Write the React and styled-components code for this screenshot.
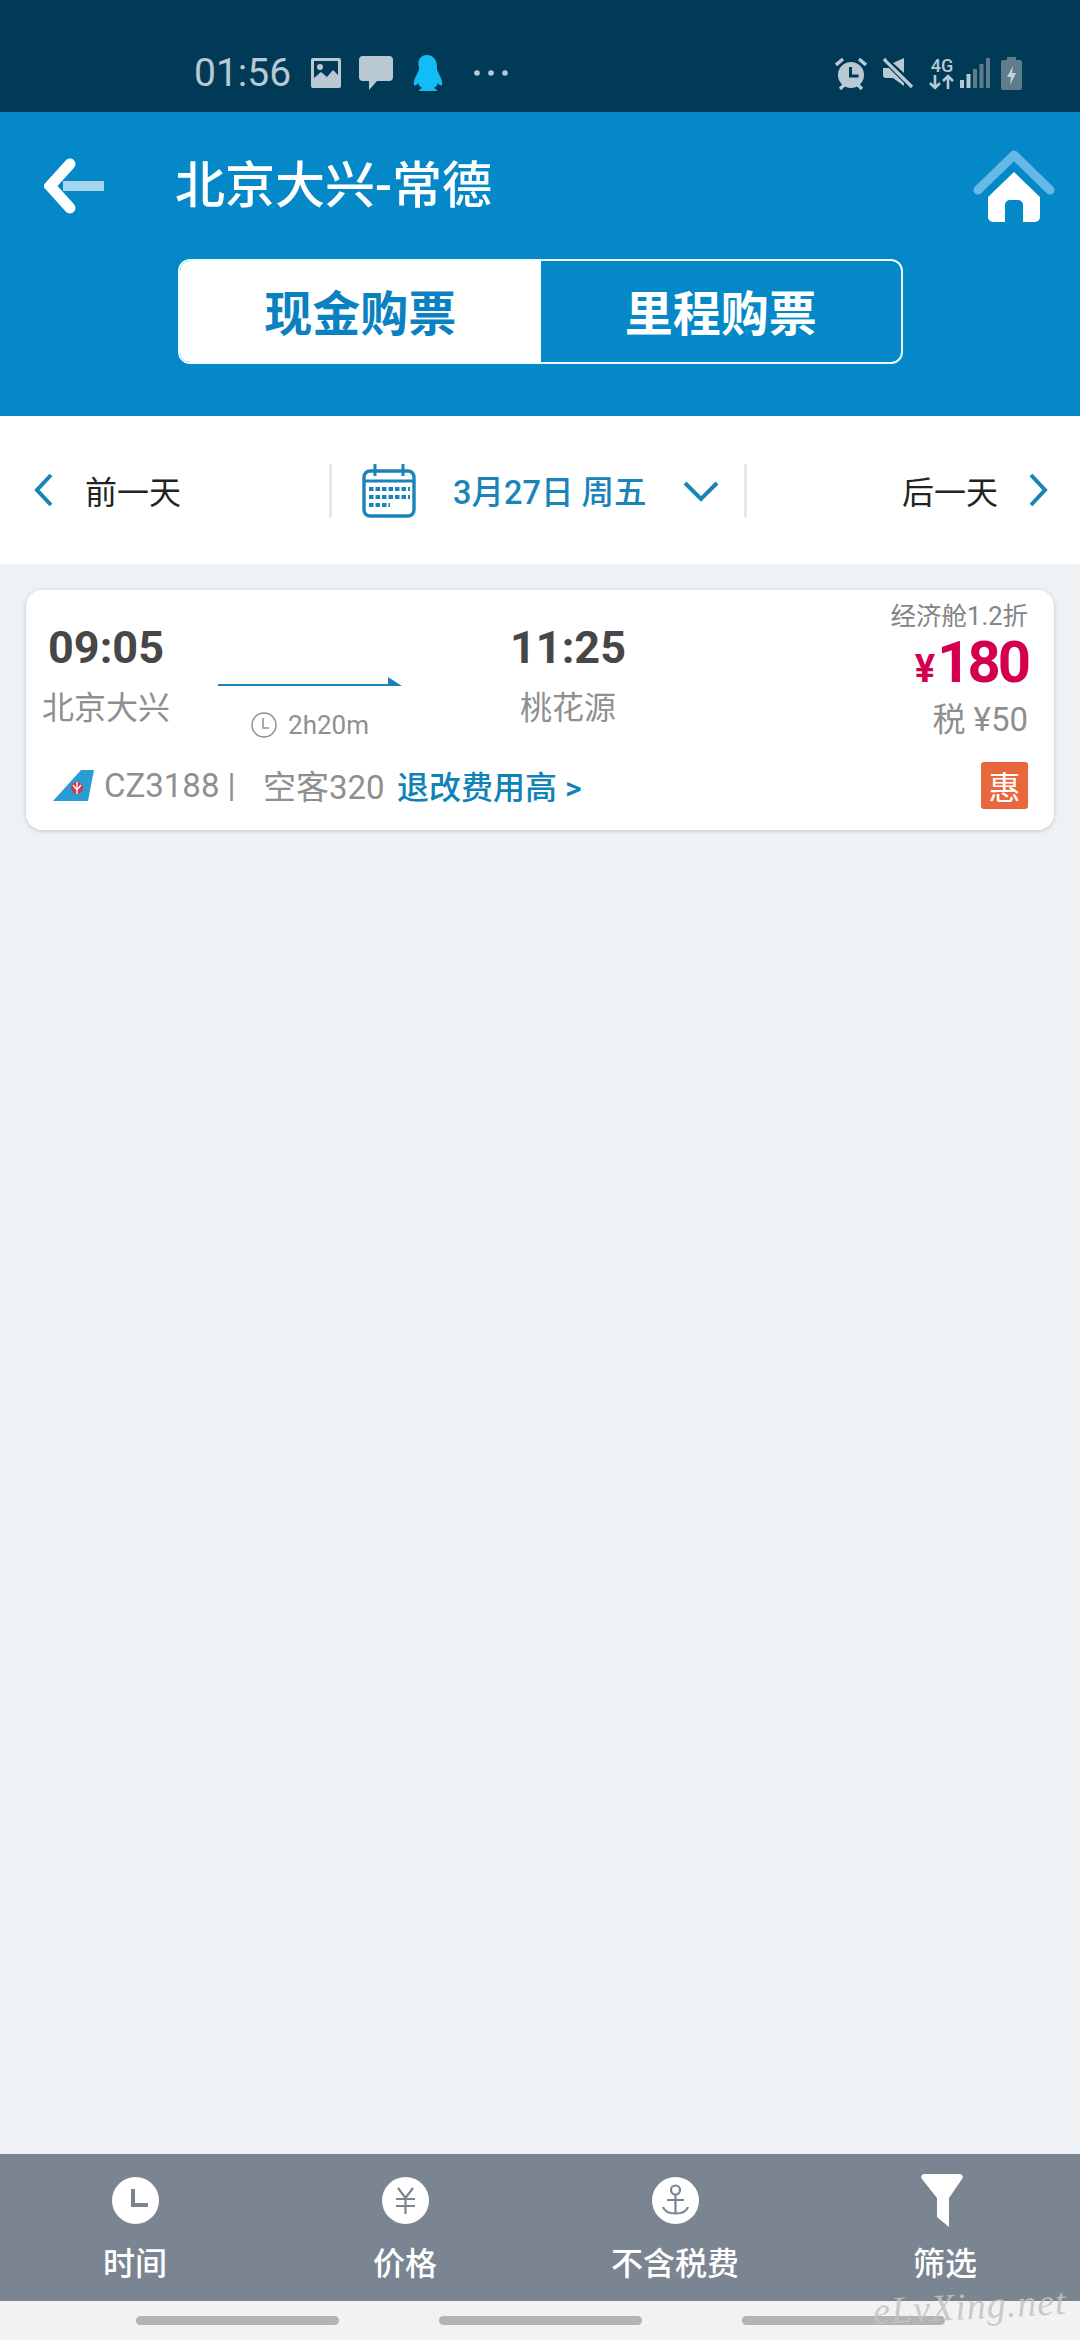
import styled, { createGlobalStyle } from "styled-components";

const GlobalStyle = createGlobalStyle`
  html, body {
    margin: 0;
    padding: 0;
    background: #eef2f5;
  }
  * {
    box-sizing: border-box;
  }
`;

const Screen = styled.div`
  position: relative;
  width: 1080px;
  height: 2340px;
  display: flex;
  flex-direction: column;
  overflow: hidden;
  background: #eef2f5;
  font-family: Roboto, "Noto Sans CJK SC", sans-serif;
`;

const StatusBar = styled.div`
  height: 112px;
  flex: none;
  display: flex;
  align-items: center;
  padding: 34px 58px 0 194px;
  background: #003a57;
  color: #b9c9d3;
`;

const Clock = styled.span`
  font-size: 39px;
  width: 117px;
  line-height: 44px;
`;

const StatusGroup = styled.div`
  display: flex;
  align-items: center;
  gap: ${(p) => p.$gap || 18}px;
  margin-left: ${(p) => (p.$right ? "auto" : "0")};
`;

const NetLabel = styled.div`
  display: flex;
  flex-direction: column;
  align-items: center;
  width: 26px;
  font-size: 18px;
  font-weight: 500;
  line-height: 17px;
`;

const Header = styled.header`
  height: 304px;
  flex: none;
  display: flex;
  flex-direction: column;
  background: #0588c8;
`;

const TitleRow = styled.div`
  display: flex;
  align-items: center;
  height: 100px;
  margin-top: 24px;
  padding: 0 25px 0 44px;
`;

const Title = styled.h1`
  margin: 0 0 0 71px;
  flex: 1;
  color: #fff;
  font-size: 50px;
  font-weight: 500;
  line-height: 60px;
`;

const Segments = styled.div`
  display: flex;
  width: 725px;
  height: 105px;
  margin: 23px 0 0 178px;
  border: 2px solid #e9fbff;
  border-radius: 12px;
  overflow: hidden;
`;

const Segment = styled.div`
  flex: 1;
  display: flex;
  align-items: center;
  justify-content: center;
  padding-bottom: 3px;
  background: ${(p) => (p.$active ? "#fff" : "transparent")};
  color: ${(p) => (p.$active ? "#0a82bf" : "#fff")};
  font-size: 48px;
  font-weight: 700;
`;

const DateBar = styled.nav`
  height: 148px;
  flex: none;
  display: flex;
  align-items: center;
  background: #fff;
  color: #222;
  font-size: 32px;
`;

const DayLink = styled.div`
  flex: ${(p) => (p.$end ? "1" : "none")};
  width: ${(p) => (p.$end ? "auto" : "329px")};
  display: flex;
  align-items: center;
  justify-content: ${(p) => (p.$end ? "flex-end" : "flex-start")};
  gap: ${(p) => (p.$end ? 30 : 31)}px;
  padding: ${(p) => (p.$end ? "0 31px 0 0" : "0 0 0 33px")};
`;

const DatePicker = styled.div`
  width: 418px;
  height: 54px;
  flex: none;
  margin-top: 2px;
  display: flex;
  align-items: center;
  padding: 0 25px 0 30px;
  border-left: 3px solid #e6e9eb;
  border-right: 3px solid #e6e9eb;
  color: #1a84b8;
  font-size: 32.500px;
  font-weight: 500;
`;

const DateText = styled.span`
  margin: -3px auto 0 37px;
  white-space: pre;
`;

const Main = styled.main`
  flex: 1;
  padding: 26px 26px 0;
`;

const Card = styled.article`
  height: 240px;
  display: grid;
  grid-template-columns: 160px 302px 160px 1fr;
  grid-template-rows: 160px 1fr;
  background: #fff;
  border-radius: 16px;
  box-shadow: 0 1px 4px rgba(70, 85, 95, 0.28);
`;

const Stop = styled.div`
  display: flex;
  flex-direction: column;
  align-items: center;
  padding-top: 31px;
`;

const TimeText = styled.div`
  color: #474747;
  font-size: 45px;
  font-weight: 700;
  line-height: 54px;
`;

const City = styled.div`
  margin-top: 6px;
  color: #8f8f8f;
  font-size: 32px;
  line-height: 54px;
`;

const Route = styled.div`
  display: flex;
  flex-direction: column;
  align-items: center;
  padding: 86px 56px 0 2px;
`;

const Duration = styled.div`
  display: flex;
  align-items: center;
  gap: 11px;
  margin-top: 17px;
  color: #8f8f8f;
  font-size: 26px;
  line-height: 40px;
`;

const Fare = styled.div`
  display: flex;
  flex-direction: column;
  align-items: flex-end;
  padding: 9px 26px 0 0;
`;

const FareClass = styled.div`
  color: #858585;
  font-size: 25.500px;
  line-height: 35px;
`;

const Price = styled.div`
  display: flex;
  align-items: baseline;
  gap: 2px;
  color: #d4004f;
  font-size: 58px;
  font-weight: 700;
  letter-spacing: -3px;
  line-height: 56px;
  small {
    font-size: 38px;
    letter-spacing: 0;
  }
`;

const Tax = styled.div`
  margin-top: -2px;
  color: #8f8f8f;
  font-size: 33px;
  line-height: 50px;
`;

const FlightRow = styled.div`
  grid-column: 1 / -1;
  display: flex;
  align-items: center;
  height: 56px;
  margin-top: 7px;
  padding: 0 26px 0 27px;
  color: #8f8f8f;
  font-size: 33px;
`;

const FlightNo = styled.span`
  margin-left: 9px;
  width: 159px;
`;

const Model = styled.span`
  width: 134px;
`;

const ChangeFee = styled.span`
  flex: 1;
  color: #0f83b8;
  font-size: 32px;
  font-weight: 500;
`;

const Badge = styled.span`
  width: 47px;
  height: 47px;
  display: flex;
  align-items: center;
  justify-content: center;
  background: #e8673c;
  border-radius: 3px;
  color: #fff;
  font-size: 32px;
`;

const SortBar = styled.footer`
  height: 147px;
  flex: none;
  display: grid;
  grid-template-columns: repeat(4, 1fr);
  background: #7a8591;
`;

const SortItem = styled.div`
  display: flex;
  flex-direction: column;
  align-items: center;
  padding-top: 20px;
  color: #fff;
  font-size: 32px;
  font-weight: 500;
`;

const SortIcon = styled.div`
  height: 52px;
  display: flex;
  align-items: center;
  margin-bottom: 12px;
`;

const NavBar = styled.div`
  height: 39px;
  flex: none;
  display: flex;
  gap: 100px;
  padding: 15px 0 0 136px;
  background: #f2f2f2;
`;

const NavPill = styled.span`
  width: 203px;
  height: 9px;
  border-radius: 5px;
  background: #b3b3b3;
`;

const Watermark = styled.div`
  position: absolute;
  left: 873px;
  top: 2286px;
  color: rgba(195, 195, 195, 0.85);
  font-family: "Liberation Serif", serif;
  font-size: 38px;
  font-style: italic;
  line-height: 40px;
  letter-spacing: 1px;
  white-space: nowrap;
  transform: rotate(-3deg);
`;

const ImageIcon = () => (
  <svg width="30" height="30" viewBox="0 0 30 30">
    <path fill="#b9c9d3" fillRule="evenodd" d="M2 0h26a2 2 0 0 1 2 2v26a2 2 0 0 1-2 2H2a2 2 0 0 1-2-2V2a2 2 0 0 1 2-2zM3 3v17l7-6 6 5 6-7 5 5V3z" />
    <circle cx="9" cy="9" r="3" fill="#b9c9d3" />
  </svg>
);

const ChatIcon = () => (
  <svg width="34" height="34" viewBox="0 0 34 34">
    <path fill="#b9c9d3" d="M4 0h26a4 4 0 0 1 4 4v17a4 4 0 0 1-4 4H18l-8 9v-9H4a4 4 0 0 1-4-4V4a4 4 0 0 1 4-4z" />
  </svg>
);

const PenguinIcon = () => (
  <svg width="32" height="37" viewBox="0 0 32 37">
    <path fill="#10bdf5" d="M16 0c7 0 10 6 10 12 0 2 0 3 1 5 2 4 5 9 4 13-1 1-3 0-4-2-1 2-2 4-4 5 2 1 3 2 3 3H8c0-1 1-2 3-3-2-1-3-3-4-5-1 2-3 3-4 2-1-4 2-9 4-13 1-2 1-3 1-5C6 6 9 0 16 0z" />
  </svg>
);

const DotsIcon = () => (
  <svg width="48" height="8" viewBox="0 0 48 8">
    <circle cx="16" cy="4" r="2.800" fill="#b9c9d3" />
    <circle cx="30" cy="4" r="2.800" fill="#b9c9d3" />
    <circle cx="44" cy="4" r="2.800" fill="#b9c9d3" />
  </svg>
);

const AlarmIcon = () => (
  <svg width="32" height="33" viewBox="0 0 32 33">
    <circle cx="16" cy="18" r="13" fill="#b9c9d3" />
    <path stroke="#b9c9d3" strokeWidth="3.400" d="M1 8l7-6M31 8l-7-6M5 32l4-4M27 32l-4-4" />
    <path stroke="#003a57" strokeWidth="3" fill="none" d="M15.500 10v9h8" />
  </svg>
);

const MuteIcon = () => (
  <svg width="30" height="32" viewBox="0 0 30 32">
    <path fill="#b9c9d3" d="M21 1v15L10 6zM0 11h6l15 15v3l-11-8H3a3 3 0 0 1-3-3z" />
    <path stroke="#b9c9d3" strokeWidth="3.400" d="M1 2l28 28" />
    <path stroke="#003a57" strokeWidth="1.600" d="M4 2l26 25" />
  </svg>
);

const ArrowsIcon = () => (
  <svg width="26" height="16" viewBox="0 0 26 16">
    <path stroke="#b9c9d3" strokeWidth="2.600" fill="none" d="M6 1v13M1 9l5 5 5-5M19 15V2M14 7l5-5 5 5" />
  </svg>
);

const SignalIcon = () => (
  <svg width="36" height="30" viewBox="0 0 36 30">
    <rect x="0" y="22" width="4" height="8" fill="#b9c9d3" />
    <rect x="6.500" y="16" width="4" height="14" fill="#b9c9d3" />
    <rect x="13" y="11" width="4" height="19" fill="#5f7c8d" />
    <rect x="19.500" y="6" width="4" height="24" fill="#5f7c8d" />
    <rect x="26" y="0" width="4" height="30" fill="#5f7c8d" />
  </svg>
);

const BatteryIcon = () => (
  <svg width="21" height="33" viewBox="0 0 21 33">
    <path fill="#5f7c8d" d="M6 0h9v3h4a2 2 0 0 1 2 2v26a2 2 0 0 1-2 2H2a2 2 0 0 1-2-2V5a2 2 0 0 1 2-2h4z" />
    <path fill="#c4d2da" d="M12 9l-6 11h4l-1 8 6-12h-4z" />
  </svg>
);

const BackIcon = () => (
  <svg width="60" height="56" viewBox="0 0 60 56">
    <path stroke="#fff" strokeWidth="11" strokeLinecap="round" fill="none" d="M26 6L6 28l20 22" />
    <path stroke="#a6d4ee" strokeWidth="10" d="M19 28h41" />
  </svg>
);

const HomeIcon = () => (
  <svg width="82" height="72" viewBox="0 0 82 72">
    <path stroke="#67b8e6" strokeWidth="9" strokeLinecap="round" strokeLinejoin="round" fill="none" d="M5 40L41 5l36 35" />
    <path fill="#fff" d="M41 22l26 25v20a5 5 0 0 1-5 5H50V55a5 5 0 0 0-5-5h-8a5 5 0 0 0-5 5v17H20a5 5 0 0 1-5-5V47z" />
  </svg>
);

const Chevron = ({ d, width = 21, height = 34 }) => (
  <svg width={width} height={height} viewBox={`0 0 ${width} ${height}`}>
    <path stroke="#1a84b8" strokeWidth="4" fill="none" d={d} />
  </svg>
);

const CalendarIcon = () => (
  <svg width="54" height="54" viewBox="0 0 54 54">
    <rect x="2" y="7" width="50" height="45" rx="6" fill="none" stroke="#1a84b8" strokeWidth="3.400" />
    <path stroke="#1a84b8" strokeWidth="3" d="M13 0v12M41 0v12M2 17h50" />
    <path stroke="#1a84b8" strokeWidth="4" strokeDasharray="4.500 2" d="M7 25h41M7 33h41M7 41h21" />
  </svg>
);

const FlightArrow = () => (
  <svg width="184" height="12" viewBox="0 0 184 12">
    <path stroke="#1a84b8" strokeWidth="2" d="M0 9h180" />
    <path fill="#1a84b8" d="M170 1l14 9h-14z" />
  </svg>
);

const SmallClock = () => (
  <svg width="26" height="26" viewBox="0 0 26 26">
    <circle cx="13" cy="13" r="12" fill="none" stroke="#8f8f8f" strokeWidth="1.500" />
    <path stroke="#8f8f8f" strokeWidth="1.500" fill="none" d="M12 6v10h6" />
  </svg>
);

const AirlineLogo = () => (
  <svg width="42" height="31" viewBox="0 0 42 31">
    <path fill="#2a9dd2" d="M28 0h13l-6 31H0z" />
    <circle cx="24" cy="18" r="6" fill="#d13a4a" />
    <path stroke="#fff" strokeWidth="1.300" fill="none" d="M24 12v12M20 15l4 5 4-5" />
  </svg>
);

const CircleIcon = ({ children }) => (
  <svg width="47" height="47" viewBox="0 0 47 47">
    <circle cx="23.500" cy="23.500" r="23.500" fill="#fff" />
    {children}
  </svg>
);

const SORT_STROKE = { stroke: "#7a8591", fill: "none" };

const TimeIcon = () => (
  <CircleIcon>
    <path {...SORT_STROKE} strokeWidth="4" d="M21 12v16h15" />
  </CircleIcon>
);

const YenIcon = () => (
  <CircleIcon>
    <path {...SORT_STROKE} strokeWidth="2.200" d="M16 11l7.500 10L31 11M14 22h19M14 29h19M23.500 21v16" />
  </CircleIcon>
);

const AnchorIcon = () => (
  <CircleIcon>
    <circle {...SORT_STROKE} strokeWidth="2.200" cx="23.500" cy="13" r="4.500" />
    <path {...SORT_STROKE} strokeWidth="2.200" d="M23.500 17.500V37M15 23h17M11 30c2 6 8 6.500 12.500 6.500S34 36 36 30" />
  </CircleIcon>
);

const FilterIcon = () => (
  <svg width="48" height="53" viewBox="0 0 48 53">
    <path fill="#fff" d="M3 0h36a3 3 0 0 1 2 5L28 24v29L16 43V24L1 5a3 3 0 0 1 2-5z" />
  </svg>
);

const SORTS = [
  { label: "时间", icon: <TimeIcon /> },
  { label: "价格", icon: <YenIcon /> },
  { label: "不含税费", icon: <AnchorIcon /> },
  { label: "筛选", icon: <FilterIcon /> },
];

export default function App() {
  return (
    <Screen>
      <GlobalStyle />
      <StatusBar>
        <Clock>01:56</Clock>
        <StatusGroup>
          <ImageIcon />
          <ChatIcon />
          <PenguinIcon />
          <DotsIcon />
        </StatusGroup>
        <StatusGroup $right $gap={16}>
          <AlarmIcon />
          <MuteIcon />
          <StatusGroup $gap={5}>
            <NetLabel>
              4G
              <ArrowsIcon />
            </NetLabel>
            <SignalIcon />
            <BatteryIcon />
          </StatusGroup>
        </StatusGroup>
      </StatusBar>

      <Header>
        <TitleRow>
          <BackIcon />
          <Title>北京大兴-常德</Title>
          <HomeIcon />
        </TitleRow>
        <Segments>
          <Segment $active>现金购票</Segment>
          <Segment>里程购票</Segment>
        </Segments>
      </Header>

      <DateBar>
        <DayLink>
          <Chevron d="M18 2L4 17l14 15" />
          前一天
        </DayLink>
        <DatePicker>
          <CalendarIcon />
          <DateText>3月27日 周五</DateText>
          <Chevron width={36} height={22} d="M2 3l16 16L34 3" />
        </DatePicker>
        <DayLink $end>
          后一天
          <Chevron d="M3 2l14 15L3 32" />
        </DayLink>
      </DateBar>

      <Main>
        <Card>
          <Stop>
            <TimeText>09:05</TimeText>
            <City>北京大兴</City>
          </Stop>
          <Route>
            <FlightArrow />
            <Duration>
              <SmallClock />
              2h20m
            </Duration>
          </Route>
          <Stop>
            <TimeText>11:25</TimeText>
            <City>桃花源</City>
          </Stop>
          <Fare>
            <FareClass>经济舱1.2折</FareClass>
            <Price>
              <small>¥</small>180
            </Price>
            <Tax>税 ¥50</Tax>
          </Fare>
          <FlightRow>
            <AirlineLogo />
            <FlightNo>CZ3188 |</FlightNo>
            <Model>空客320</Model>
            <ChangeFee>退改费用高 &gt;</ChangeFee>
            <Badge>惠</Badge>
          </FlightRow>
        </Card>
      </Main>

      <SortBar>
        {SORTS.map((item) => (
          <SortItem key={item.label}>
            <SortIcon>{item.icon}</SortIcon>
            {item.label}
          </SortItem>
        ))}
      </SortBar>
      <NavBar>
        <NavPill />
        <NavPill />
        <NavPill />
      </NavBar>
      <Watermark>eLvXing.net</Watermark>
    </Screen>
  );
}
